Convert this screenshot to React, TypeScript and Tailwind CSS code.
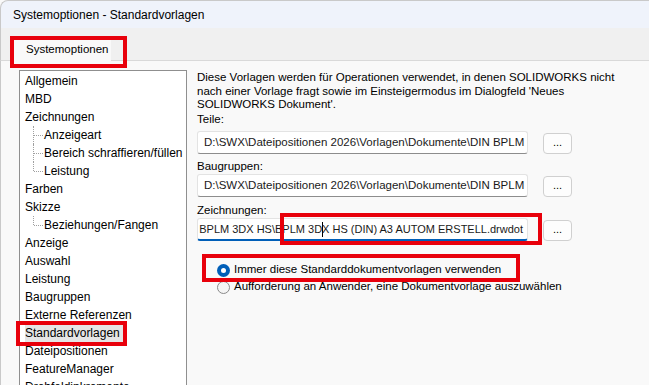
const treeItems: { label: string; child?: boolean; last?: boolean; selected?: boolean }[] = [
  { label: 'Allgemein' },
  { label: 'MBD' },
  { label: 'Zeichnungen' },
  { label: 'Anzeigeart', child: true },
  { label: 'Bereich schraffieren/füllen', child: true },
  { label: 'Leistung', child: true, last: true },
  { label: 'Farben' },
  { label: 'Skizze' },
  { label: 'Beziehungen/Fangen', child: true, last: true },
  { label: 'Anzeige' },
  { label: 'Auswahl' },
  { label: 'Leistung' },
  { label: 'Baugruppen' },
  { label: 'Externe Referenzen' },
  { label: 'Standardvorlagen', selected: true },
  { label: 'Dateipositionen' },
  { label: 'FeatureManager' },
  { label: 'Drehfeldinkremente' },
];

function TreeRow({ item }: { item: (typeof treeItems)[number] }) {
  return (
    <div className="relative h-[18px] flex items-center">
      {item.child && (
        <>
          {/* dotted tree connector */}
          <div
            className={`absolute left-[13px] top-0 border-l border-dotted border-[#a0a0a0] ${
              item.last ? 'h-[9px]' : 'h-[18px]'
            }`}
          />
          <div className="absolute left-[14px] top-[9px] w-[9px] border-t border-dotted border-[#a0a0a0]" />
        </>
      )}
      <span
        className={`whitespace-nowrap leading-[18px] ${item.child ? 'ml-[24px]' : 'ml-[5px]'} ${
          item.selected ? 'bg-[#e5e5e5] pr-[6px]' : ''
        }`}
      >
        {item.label}
      </span>
    </div>
  );
}

function PathField({ children, focused }: { children: React.ReactNode; focused?: boolean }) {
  return (
    <div className="flex items-start gap-[15px]">
      <div
        className={`relative w-[331px] h-[23px] bg-white border border-[#e3e3e3] rounded-[3px] overflow-hidden flex items-center ${
          focused
            ? 'border-b-2 border-b-[#005fb8] justify-end pr-[4px] text-[11px]'
            : 'border-b-[#8d8d8d] pl-[6px]'
        }`}
      >
        <span className="whitespace-nowrap text-[#1a1a1a]">{children}</span>
      </div>
      <button className="mt-[2px] w-[29px] h-[21px] bg-[#fdfdfd] border border-[#d0d0d0] rounded-[4px] flex items-center justify-center text-[11px] leading-none pb-[3px]">
        ...
      </button>
    </div>
  );
}

export default function App() {
  return (
    <div
      className="relative w-[649px] h-[385px] overflow-hidden bg-[#f9f9f9] text-[12px] text-black"
      style={{ fontFamily: '"Liberation Sans", Arial, sans-serif' }}
    >
      {/* title bar */}
      <div className="h-[28px] bg-[#eff3fb] flex items-center pl-[12px] rounded-tl-[8px] border-l border-t border-[#c9c9c9]">
        Systemoptionen - Standardvorlagen
      </div>

      {/* tab strip */}
      <div className="h-[33px] bg-[#f0f0f0] border-b border-[#d9d9d9] border-l border-l-[#c9c9c9] flex items-end pl-[12px]">
        <div className="relative -mb-px h-[22px] w-[98px] bg-[#f9f9f9] flex items-center pl-[13px] text-[11.5px]">
          Systemoptionen
        </div>
      </div>

      {/* page */}
      <div className="flex pt-[9px] pl-[18px] border-l border-[#c9c9c9] h-full">
        <div className="w-[168px] h-[330px] bg-white border border-[#8f8f8f] pt-px overflow-hidden">
          {treeItems.map((item, i) => (
            <TreeRow key={i} item={item} />
          ))}
        </div>

        <div className="ml-[10px] flex flex-col text-[11.5px]">
          <p className="leading-[13.5px] mt-[1px] whitespace-nowrap">
            Diese Vorlagen werden für Operationen verwendet, in denen SOLIDWORKS nicht
            <br />
            nach einer Vorlage fragt sowie im Einsteigermodus im Dialogfeld 'Neues
            <br />
            SOLIDWORKS Dokument'.
          </p>

          <div className="leading-[14px]">Teile:</div>
          <div className="mt-[5.5px]">
            <PathField>D:\SWX\Dateipositionen 2026\Vorlagen\Dokumente\DIN BPLM</PathField>
          </div>

          <div className="mt-[4.5px] leading-[14px]">Baugruppen:</div>
          <div className="mt-[1.5px]">
            <PathField>D:\SWX\Dateipositionen 2026\Vorlagen\Dokumente\DIN BPLM</PathField>
          </div>

          <div className="mt-[6px] leading-[14px]">Zeichnungen:</div>
          <div className="mt-[1px]">
            <PathField focused>
              DIN BPLM 3DX HS\BPLM 3D
              <span className="inline-block w-px h-[15px] bg-black align-middle -mx-[0.5px]" />
              X HS (DIN) A3 AUTOM ERSTELL.drwdot
            </PathField>
          </div>

          <div className="mt-[22.5px] flex flex-col gap-[4px] pl-[20px]">
            <label className="flex items-center gap-[4px] h-[13px] whitespace-nowrap">
              <span className="w-[13px] h-[13px] rounded-full bg-[#005fb8] flex items-center justify-center shrink-0">
                <span className="w-[5px] h-[5px] rounded-full bg-white" />
              </span>
              Immer diese Standarddokumentvorlagen verwenden
            </label>
            <label className="flex items-center gap-[4px] h-[13px] whitespace-nowrap">
              <span className="w-[13px] h-[13px] rounded-full border border-[#8a8a8a] bg-[#f5f5f5] shrink-0" />
              Aufforderung an Anwender, eine Dokumentvorlage auszuwählen
            </label>
          </div>
        </div>
      </div>

      {/* red annotation frames */}
      <div className="absolute left-[10px] top-[36px] w-[117px] h-[32px] border-4 border-[#e8000b]" />
      <div className="absolute left-[16px] top-[321px] w-[111px] h-[25px] border-4 border-[#e8000b]" />
      <div className="absolute left-[280px] top-[213px] w-[262px] h-[32px] border-4 border-[#e8000b]" />
      <div className="absolute left-[202px] top-[254px] w-[318px] h-[28px] border-4 border-[#e8000b]" />
    </div>
  );
}
